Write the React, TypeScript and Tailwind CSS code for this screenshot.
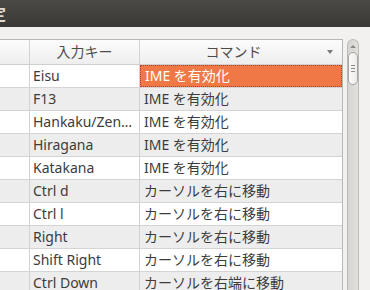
const rows = [
  { key: "Eisu", cmd: "IME を有効化" },
  { key: "F13", cmd: "IME を有効化" },
  { key: "Hankaku/Zenkaku", cmd: "IME を有効化" },
  { key: "Hiragana", cmd: "IME を有効化" },
  { key: "Katakana", cmd: "IME を有効化" },
  { key: "Ctrl d", cmd: "カーソルを右に移動" },
  { key: "Ctrl l", cmd: "カーソルを右に移動" },
  { key: "Right", cmd: "カーソルを右に移動" },
  { key: "Shift Right", cmd: "カーソルを右に移動" },
  { key: "Ctrl Down", cmd: "カーソルを右端に移動" },
];

function Scrollbar() {
  return (
    <div className="ml-[4px] flex h-full w-[12px] flex-col items-center rounded-t-full border border-b-0 border-[#bcbab6] bg-gradient-to-r from-[#d6d4d0] to-[#e2e0dc] pt-[5px]">
      <div className="h-0 w-0 border-x-[3px] border-b-[3px] border-x-transparent border-b-[#8a8985]" />
      <div className="mt-[4px] flex h-[33px] w-[10px] flex-col items-center justify-center gap-[2px] rounded-full border border-[#a6a5a1] bg-gradient-to-r from-[#fbfbfa] to-[#ecebe9]">
        <div className="h-px w-[4px] bg-[#8e8d89]" />
        <div className="h-px w-[4px] bg-[#8e8d89]" />
        <div className="h-px w-[4px] bg-[#8e8d89]" />
      </div>
    </div>
  );
}

export default function App() {
  return (
    <div
      className="h-[290px] w-[370px] overflow-hidden bg-[#f2f1f0] text-[14px] text-[#3c3c3c]"
      style={{ fontFamily: '"Noto Sans", "Noto Sans CJK JP", sans-serif' }}
    >
      <div className="flex h-[27px] items-center overflow-hidden bg-gradient-to-b from-[#4b4a46] to-[#3a3935]">
        <span className="-ml-[26px] text-[16px] font-bold text-[#dfdbd2]">設定</span>
      </div>
      <div className="flex h-[263px] pt-[12px]">
        <div className="w-[343px] overflow-hidden border-t border-r border-[#b8b7b4] bg-white">
          <div className="flex h-[25px] border-b border-[#cfcfcf] bg-gradient-to-b from-[#fcfcfc] to-[#eeeeee] text-[#4c4c4c]">
            <div className="w-[30px] border-r border-[#d2d2d2]" />
            <div className="w-[110px] border-r border-[#d2d2d2] text-center leading-[24px]">入力キー</div>
            <div className="flex flex-1 items-center">
              <span className="flex-1 text-center leading-[24px]">コマンド</span>
              <span className="mr-[9px] h-0 w-0 border-x-[3.5px] border-t-[4px] border-x-transparent border-t-[#7a7a7a]" />
            </div>
          </div>
          {rows.map((r, i) => (
            <div
              key={r.key}
              className={`flex h-[23px] border-b border-[#d4d4d4] leading-[22px] ${i % 2 ? "bg-[#ededed]" : "bg-white"}`}
            >
              <div className="w-[30px] border-r border-[#d2d2d2]" />
              <div className="w-[110px] truncate border-r border-[#d2d2d2] pl-[3px] pr-[4px]">{r.key}</div>
              <div
                className={`flex-1 truncate pl-[4px] ${i === 0 ? "border border-dotted border-[#9c4a28] bg-[#f07746] pl-[3px] leading-[20px] text-white" : ""}`}
              >
                {r.cmd}
              </div>
            </div>
          ))}
        </div>
        <Scrollbar />
      </div>
    </div>
  );
}
